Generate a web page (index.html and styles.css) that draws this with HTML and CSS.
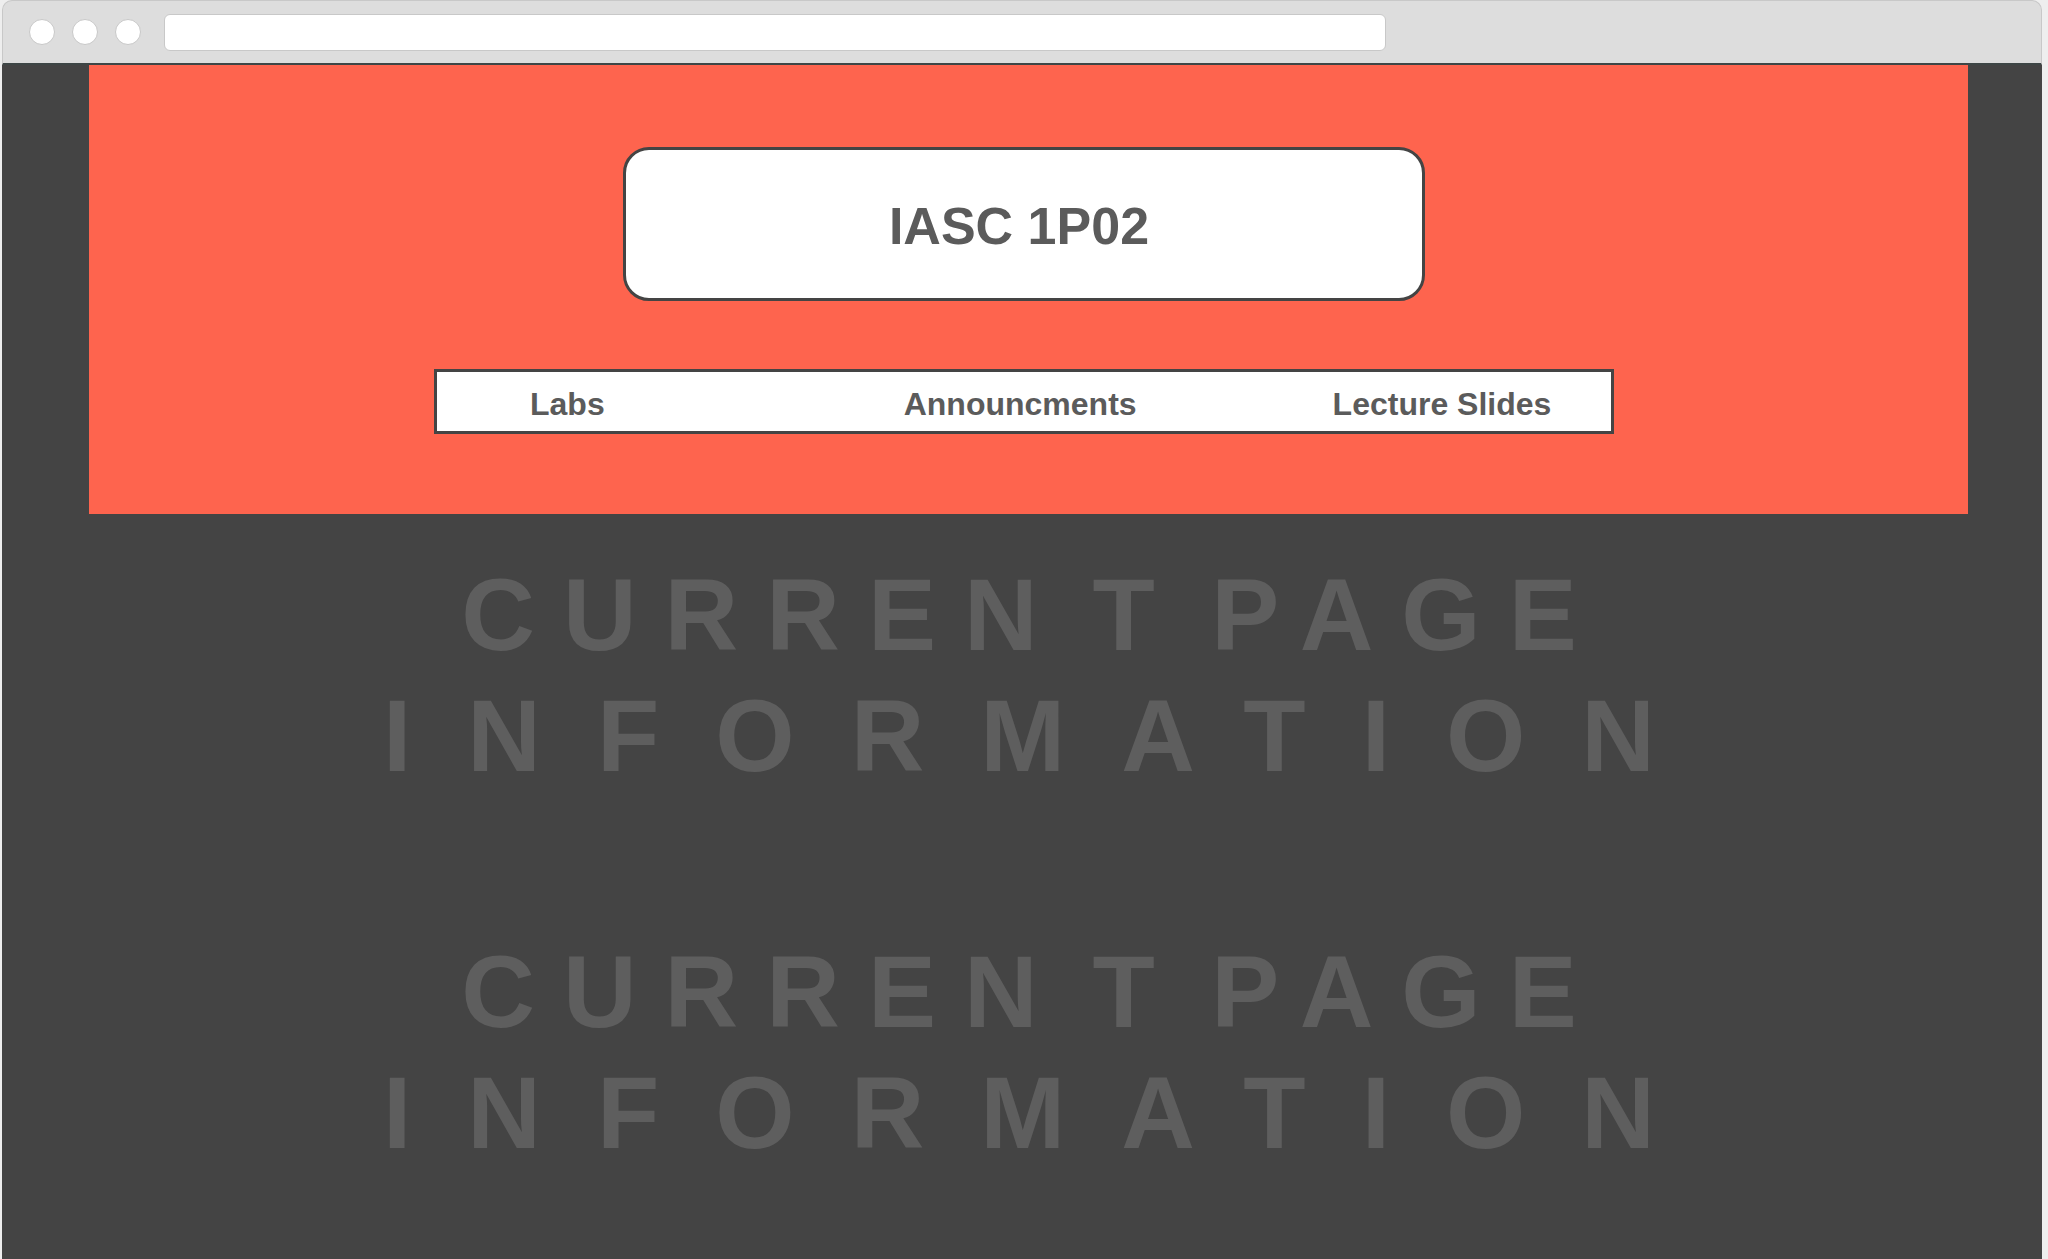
FILE: index.html
```html
<!DOCTYPE html>
<html lang="en">
<head>
<meta charset="utf-8">
<title>IASC 1P02</title>
<link rel="stylesheet" href="styles.css">
</head>
<body>
<div class="window">
  <div class="chrome">
    <span class="dot"></span>
    <span class="dot"></span>
    <span class="dot"></span>
    <div class="address"></div>
  </div>
  <div class="page">
    <header class="hero">
      <div class="title-box"><h1 class="title">IASC 1P02</h1></div>
      <nav class="nav">
        <a class="nav-link nav-link--labs" href="#">Labs</a>
        <a class="nav-link nav-link--news" href="#">Announcments</a>
        <a class="nav-link nav-link--slides" href="#">Lecture Slides</a>
      </nav>
    </header>
    <main class="content">
      <section class="info">
        <p class="info-line info-line--top">CURREN<span class="info-t">T</span> PAGE</p>
        <p class="info-line info-line--bottom">INFORMATION</p>
      </section>
      <section class="info">
        <p class="info-line info-line--top">CURREN<span class="info-t">T</span> PAGE</p>
        <p class="info-line info-line--bottom">INFORMATION</p>
      </section>
    </main>
  </div>
</div>
</body>
</html>
```

FILE: styles.css
```css
html, body {
  margin: 0;
  padding: 0;
  height: 100%;
}

body {
  background: #eeeeee;
  font-family: "Liberation Sans", Arial, sans-serif;
  overflow: hidden;
}

.window {
  margin-left: 2px;
  width: 2040px;
  height: 1259px;
  display: flex;
  flex-direction: column;
}

.chrome {
  box-sizing: border-box;
  height: 65px;
  flex: none;
  background: #dddddd;
  border: 1px solid #c8c8c8;
  border-bottom: 2px solid #3e4646;
  border-radius: 10px 10px 0 0;
  display: flex;
  align-items: center;
  padding-left: 26px;
}

.dot {
  box-sizing: border-box;
  width: 26px;
  height: 26px;
  border-radius: 50%;
  background: #ffffff;
  border: 1px solid #c8c8c8;
  margin-right: 17px;
}

.address {
  box-sizing: border-box;
  width: 1222px;
  height: 37px;
  margin-left: 6px;
  background: #ffffff;
  border: 1px solid #c8c8c8;
  border-radius: 6px;
}

.page {
  flex: 1;
  background: #444444;
  display: flex;
  flex-direction: column;
}

.hero {
  box-sizing: border-box;
  height: 449px;
  margin: 0 74px 0 87px;
  background: #fe644e;
  padding: 82px 9px 0 0;
  display: flex;
  flex-direction: column;
  align-items: center;
}

.title-box {
  box-sizing: border-box;
  width: 802px;
  height: 154px;
  background: #ffffff;
  border: 3px solid #444444;
  border-radius: 26px;
  display: flex;
  align-items: center;
  justify-content: center;
  padding: 4px 10px 0 0;
}

.title {
  margin: 0;
  font-size: 52px;
  font-weight: bold;
  color: #5b5b5b;
  line-height: 1;
}

.nav {
  box-sizing: border-box;
  width: 1180px;
  height: 65px;
  margin-top: 68px;
  background: #ffffff;
  border: 3px solid #444444;
  display: flex;
  align-items: center;
  padding: 6px 0 0 93px;
}

.nav-link {
  font-size: 32px;
  font-weight: bold;
  color: #5b5b5b;
  text-decoration: none;
  white-space: nowrap;
}

.nav-link--news {
  margin-left: 299px;
}

.nav-link--slides {
  margin-left: 196px;
}

.content {
  padding: 41px 6px 0 0;
  display: flex;
  flex-direction: column;
  gap: 135px;
}

.info-line {
  margin: 0;
  text-align: center;
  font-size: 102px;
  line-height: 121px;
  font-weight: bold;
  color: #5e5e5e;
  white-space: nowrap;
}

.info-line--top {
  letter-spacing: 28px;
  word-spacing: -28px;
  padding-left: 28px;
}

.info-t {
  margin-left: 27px;
}

.info-line--bottom {
  letter-spacing: 56px;
  padding-left: 56px;
}
```
